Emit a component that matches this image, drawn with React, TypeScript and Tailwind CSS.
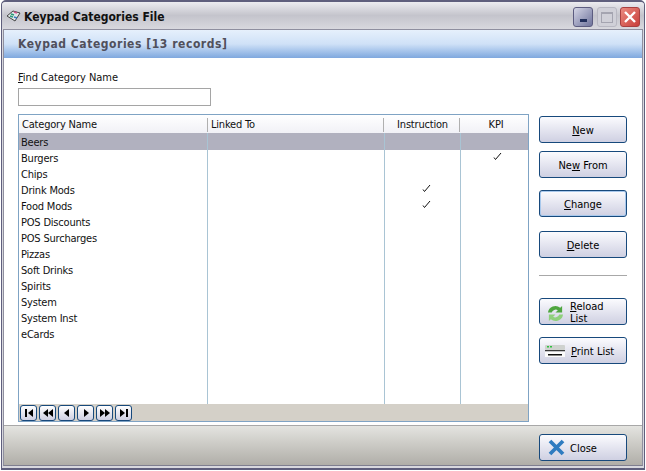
const rows = [
  { name: 'Beers' },
  { name: 'Burgers', kpi: true },
  { name: 'Chips' },
  { name: 'Drink Mods', instruction: true },
  { name: 'Food Mods', instruction: true },
  { name: 'POS Discounts' },
  { name: 'POS Surcharges' },
  { name: 'Pizzas' },
  { name: 'Soft Drinks' },
  { name: 'Spirits' },
  { name: 'System' },
  { name: 'System Inst' },
  { name: 'eCards' },
];

const navIcons = [
  'M2 2h2v8H2z M10 2v8L5 6z',
  'M6 2v8L1 6z M11 2v8L6 6z',
  'M8 2v8L3 6z',
  'M4 2v8l5-4z',
  'M1 2v8l5-4z M6 2v8l5-4z',
  'M2 2v8l5-4z M8 2h2v8H8z',
];

function Btn({ children, className = '' }: { children: React.ReactNode; className?: string }) {
  return (
    <button className={`w-[88px] h-[27px] shrink-0 rounded-[3px] border border-[#17497c] bg-gradient-to-b from-[#fbfbfe] to-[#cfd0e2] text-[11px] text-black flex items-center justify-center pt-[3px] ${className}`}>
      {children}
    </button>
  );
}

function NavBtn({ d }: { d: string }) {
  return (
    <div className="w-[17px] h-[16px] rounded-[3px] border border-[#17497c] bg-gradient-to-b from-white to-[#cfd0e2] flex items-center justify-center">
      <svg width="12" height="12" viewBox="0 0 12 12"><path d={d} fill="#000" /></svg>
    </div>
  );
}

function Check({ className }: { className: string }) {
  return (
    <svg width="9" height="9" viewBox="0 0 9 9" className={`-mt-[3px] ${className}`}>
      <path d="M1 5.500l1.500 2L8 1" fill="none" stroke="#111" strokeWidth="1" />
    </svg>
  );
}

export default function App() {
  return (
    <div className="w-[646px] h-[471px] bg-white pl-[1px] pr-[1px] pb-[1px]">
      <div className="w-full h-full flex flex-col overflow-hidden rounded-t-[5px] bg-[#d8d8de] text-[11px] text-[#111] border-[2px] border-l-[1px] border-r-[1px] border-[#5f5f7d] font-['DejaVu_Sans_Condensed','DejaVu_Sans',sans-serif] [font-stretch:condensed]">
        {/* title bar */}
        <div className="h-[27px] shrink-0 flex items-center pl-[4px] pr-[2px] bg-gradient-to-b from-[#ececf0] via-[#c4c4cc] to-[#d8d8de]">
          <svg width="16" height="14" viewBox="0 0 16 14" className="mt-[1px]">
            <path d="M1 7l6-5 7 2-5 8z" fill="#dfe6e6" stroke="#444" strokeWidth="1" />
            <path d="M5 5l3 1M4 7l3 1" stroke="#2a9a7a" strokeWidth="1.400" />
            <path d="M8 3l3 1" stroke="#d0508a" strokeWidth="1.600" />
            <path d="M8 8l3 1" stroke="#3a7ac0" strokeWidth="1.400" />
          </svg>
          <span className="ml-[2px] mt-[2px] text-[12px] font-bold text-[#111]">Keypad Categories File</span>
          <div className="ml-auto mt-[3px] flex gap-[3px] pr-[2px]">
            <div className="w-[20px] h-[20px] mr-[1px] rounded-[3px] border border-[#5c5c80] bg-gradient-to-br from-[#d5d6e6] to-[#70749c] flex items-end justify-center pb-[4px]">
              <div className="w-[7px] h-[3px] bg-[#23305c]" />
            </div>
            <div className="w-[20px] h-[20px] rounded-[3px] border border-[#b8b8c2] bg-[#d0d0d8] flex items-center justify-center">
              <div className="w-[12px] h-[11px] border border-[#a4a4b0] border-t-2" />
            </div>
            <div className="w-[20px] h-[20px] rounded-[3px] border border-[#a84040] bg-gradient-to-br from-[#ea8a80] to-[#c83c3a] flex items-center justify-center">
              <svg width="14" height="14" viewBox="0 0 14 14"><path d="M2 2l10 10M12 2L2 12" stroke="#fff" strokeWidth="2.400" /></svg>
            </div>
          </div>
        </div>

        <div className="flex-1 flex flex-col min-h-0 mx-[1px] mb-[2px] border border-[#8f8f9f] border-b-[#7f7f8f]">
          {/* banner */}
          <div className="h-[28px] shrink-0 flex items-center pl-[14px] bg-gradient-to-b from-[#e6f0fc] via-[#cfe1f7] to-[#7fa8de] text-[12px] font-bold text-[#50505c] tracking-[0.55px]">
            Keypad Categories [13 records]
          </div>

          {/* body */}
          <div className="flex-1 min-h-0 bg-white flex flex-col pl-[14px] pt-[13px]">
            <label className="h-[13px] leading-[13px] tracking-[-0.05px]"><span className="underline">F</span>ind Category Name</label>
            <div className="mt-[4px] w-[193px] h-[18px] border border-[#a5a5a5] bg-white" />
            <div className="mt-[8px] flex">
              <div className="w-[511px] h-[308px] border border-[#7fa3c4] flex flex-col tracking-[-0.2px]">
                <div className="h-[18px] shrink-0 flex items-center pt-[1px] bg-gradient-to-b from-white to-[#f1f1f6]">
                  <div className="w-[189px] pl-[3px] border-r border-[#b0b0b0] h-[14px] leading-[14px]">Category Name</div>
                  <div className="w-[176px] pl-[3px] border-r border-[#b0b0b0] h-[14px] leading-[14px]">Linked To</div>
                  <div className="w-[76px] pl-[2px] text-center border-r border-[#b0b0b0] h-[14px] leading-[14px]">Instruction</div>
                  <div className="flex-1 text-center pl-[4px] h-[14px] leading-[14px]">KPI</div>
                </div>
                <div className="flex-1 min-h-0 flex flex-col">
                  {rows.map((r, i) => (
                    <div key={r.name} className={`shrink-0 flex items-center ${i === 0 ? 'h-[17px] bg-[#b1b1bf]' : 'h-[16px]'}`}>
                      <div className={`w-[189px] h-full pl-[2px] border-r border-[#a9c4d4] ${i === 0 ? 'leading-[19px]' : 'leading-[18px]'}`}>{r.name}</div>
                      <div className="w-[177px] h-full border-r border-[#a9c4d4]" />
                      <div className="w-[76px] h-full border-r border-[#a9c4d4] flex items-center">{r.instruction && <Check className="ml-[37px]" />}</div>
                      <div className="flex-1 h-full flex items-center">{r.kpi && <Check className="ml-[32px]" />}</div>
                    </div>
                  ))}
                  <div className="flex-1 flex">
                    <div className="w-[189px] border-r border-[#a9c4d4]" />
                    <div className="w-[177px] border-r border-[#a9c4d4]" />
                    <div className="w-[76px] border-r border-[#a9c4d4]" />
                  </div>
                </div>
                <div className="h-[17px] shrink-0 bg-[#d4d0c8] flex gap-[2px] items-start pt-[1px] pl-[1px]">
                  {navIcons.map((d) => <NavBtn key={d} d={d} />)}
                </div>
              </div>

              <div className="ml-[10px] flex flex-col w-[88px] mt-[2px]">
                <Btn><span><span className="underline">N</span>ew</span></Btn>
                <Btn className="mt-[8px]"><span>Ne<span className="underline">w</span> From</span></Btn>
                <Btn className="mt-[12px] border-[#1c5c98] shadow-[inset_0_0_0_1px_#a8c8ec]"><span><span className="underline">C</span>hange</span></Btn>
                <Btn className="mt-[14px]"><span><span className="underline">D</span>elete</span></Btn>
                <div className="mt-[17px] h-px bg-[#a8a8a8]" />
                <Btn className="mt-[22px] !justify-start pl-[7px]">
                  <svg width="17" height="17" viewBox="0 0 18 18" className="shrink-0">
                    <path d="M1 8a8 8 0 0 1 13-5L16 1v7h-7l2.500-2.500A4.500 4.500 0 0 0 5 8z" fill="#4fa640" />
                    <path d="M17 10a8 8 0 0 1-13 5L2 17v-7h7l-2.500 2.500A4.500 4.500 0 0 0 13 10z" fill="#8fd07c" />
                  </svg>
                  <span className="ml-[6px] text-left leading-[12px]"><span className="underline">R</span>eload<br />List</span>
                </Btn>
                <Btn className="mt-[12px] !justify-start pl-[4px]">
                  <svg width="22" height="16" viewBox="0 0 22 16" className="shrink-0 -mt-[2px]">
                    <rect x="1" y="2" width="20" height="5" rx="1" fill="#cfd2cf" />
                    <rect x="3" y="3" width="2" height="1.500" fill="#30c040" />
                    <rect x="6" y="3" width="2" height="1.500" fill="#30c040" />
                    <rect x="1" y="7" width="20" height="1.500" fill="#3a3a3a" />
                    <rect x="1" y="8.500" width="20" height="5.500" fill="#fbfbfb" />
                    <rect x="4" y="11" width="14" height="1.500" fill="#111" />
                  </svg>
                  <span className="ml-[5px]"><span className="underline">P</span>rint List</span>
                </Btn>
              </div>
            </div>
          </div>

          {/* footer */}
          <div className="h-[40px] shrink-0 border-t border-[#a8a8a8] bg-gradient-to-b from-[#e4e4e0] to-[#b0aea8] flex items-center justify-end pr-[15px] pt-[4px]">
            <Btn className="!justify-start pl-[8px]">
              <svg width="17" height="17" viewBox="0 0 17 17" className="shrink-0 -mt-[3px]">
                <path d="M2 2l13 13M15 2L2 15" stroke="#2f7cc0" strokeWidth="3.800" />
              </svg>
              <span className="ml-[5px]">Close</span>
            </Btn>
          </div>
        </div>
      </div>
    </div>
  );
}
